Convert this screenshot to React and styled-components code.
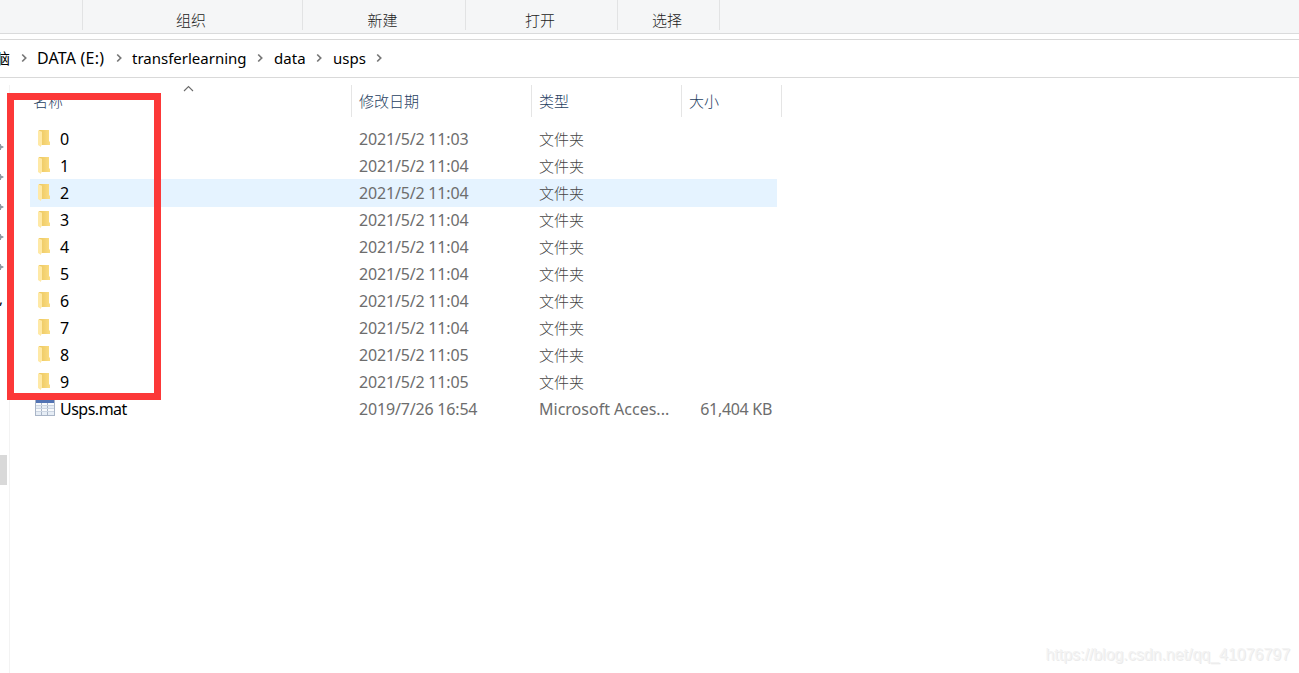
import styled, { createGlobalStyle } from 'styled-components';

const GlobalStyle = createGlobalStyle`
  * {
    box-sizing: border-box;
  }
  body {
    margin: 0;
    background: #ffffff;
    overflow: hidden;
    font-family: 'Noto Sans', 'Noto Sans CJK SC', sans-serif;
    font-size: 15px;
    color: #000000;
  }
`;

const Window = styled.div`
  position: relative;
  display: flex;
  flex-direction: column;
  width: 1299px;
  height: 673px;
  overflow: hidden;
  background: #ffffff;
`;

const Ribbon = styled.div`
  display: flex;
  height: 34px;
  background: #f5f6f7;
  border-bottom: 1px solid #dadbdc;
`;

const RibbonGroup = styled.div`
  width: ${({ $width }) => $width}px;
  height: 30px;
  padding-top: 10px;
  padding-right: 3px;
  border-right: 1px solid #e2e3e4;
  font-family: 'Noto Sans CJK SC', sans-serif;
  font-weight: 300;
  line-height: 20px;
  text-align: center;
  color: #222222;
`;

const AddressBar = styled.div`
  display: flex;
  align-items: center;
  height: 39px;
  margin-top: 5px;
  padding-bottom: 2px;
  border-top: 1px solid #d9d9d9;
  border-bottom: 1px solid #d9d9d9;
  overflow: hidden;
`;

const Crumb = styled.span`
  flex: none;
  width: ${({ $width }) => $width}px;
  margin-left: ${({ $gap = 9 }) => $gap}px;
  font-size: ${({ $size = 15 }) => $size}px;
  line-height: 20px;
  letter-spacing: ${({ $spacing = 0 }) => $spacing}px;
  white-space: nowrap;
`;

const CrumbArrow = styled.svg`
  flex: none;
  width: 7px;
  height: 10px;
  margin-left: ${({ $gap = 10 }) => $gap}px;
`;

const Content = styled.div`
  display: flex;
  flex: 1;
`;

const NavPane = styled.div`
  display: flex;
  flex-direction: column;
  width: 9px;
`;

const PinList = styled.div`
  display: flex;
  flex-direction: column;
  gap: 24px;
  padding-top: 66px;
  svg {
    display: block;
    width: 4px;
    height: 6px;
  }
`;

const NavLabel = styled.div`
  display: flex;
  width: 3px;
  height: 20px;
  margin-top: 18px;
  justify-content: flex-end;
  line-height: 20px;
`;

const NavThumb = styled.div`
  width: 7px;
  height: 30px;
  margin-top: 147px;
  background: #d9d9d9;
`;

const FilePane = styled.div`
  flex: 1;
  margin-top: 7px;
  border-left: 1px solid #f3f3f3;
`;

const HeaderRow = styled.div`
  display: flex;
  height: 32px;
  padding-left: 20px;
`;

const HeaderCell = styled.div`
  width: ${({ $width }) => $width}px;
  padding-left: ${({ $pad = 7 }) => $pad}px;
  padding-top: 6px;
  border-right: 1px solid #e5e5e5;
  font-family: 'Noto Sans CJK SC', sans-serif;
  font-weight: 300;
  line-height: 20px;
  color: #26405f;
`;

const SortArrow = styled.svg`
  position: absolute;
  left: 183px;
  top: 85px;
  width: 11px;
  height: 7px;
`;

const Rows = styled.div`
  padding: 8px 0 0 20px;
`;

const Row = styled.div`
  display: grid;
  grid-template-columns: 329px 180px 133px 100px;
  width: 747px;
  height: ${({ $active }) => ($active ? 28 : 27)}px;
  margin-bottom: ${({ $active }) => ($active ? -1 : 0)}px;
  background: ${({ $active }) => ($active ? '#e5f3ff' : 'transparent')};
  line-height: 28px;
`;

const NameCell = styled.div`
  display: flex;
  padding-left: 5px;
  font-size: 16px;
  letter-spacing: ${({ $spacing = 0 }) => $spacing}px;
  svg {
    flex: none;
    width: 20px;
    height: 19px;
    margin-top: 5px;
    margin-right: 5px;
  }
`;

const Cell = styled.div`
  font-size: 16px;
  color: #6d6d6d;
  white-space: nowrap;
  letter-spacing: ${({ $spacing = 0 }) => $spacing}px;
  text-align: ${({ $right }) => ($right ? 'right' : 'left')};
`;

const TypeCell = styled(Cell)`
  font-family: 'Noto Sans CJK SC', sans-serif;
  font-size: 15px;
  font-weight: 300;
  color: #444444;
`;

const RedFrame = styled.div`
  position: absolute;
  left: 7px;
  top: 93px;
  width: 154px;
  height: 307px;
  border: 7px solid #fc3838;
`;

const Watermark = styled.div`
  position: absolute;
  right: 9px;
  bottom: 8px;
  font-family: 'Liberation Sans', sans-serif;
  font-size: 16px;
  line-height: 20px;
  letter-spacing: -0.03px;
  color: #f3f3f3;
  text-shadow: 1px 1px 0 #ebebeb;
`;

const Arrow = ({ gap }) => (
  <CrumbArrow $gap={gap} viewBox="0 0 7 10">
    <path d="M1.2 1.5 4.7 5 1.2 8.5" fill="none" stroke="#767676" strokeWidth="1.7" />
  </CrumbArrow>
);

const FolderIcon = () => (
  <svg viewBox="0 0 20 19">
    <defs>
      <linearGradient id="folderBack" x1="0" x2="1">
        <stop offset="0" stopColor="#ecc75f" />
        <stop offset="1" stopColor="#fbdd83" />
      </linearGradient>
    </defs>
    <path d="M4 0h10v11l1 1v3H6z" fill="url(#folderBack)" />
    <path d="M3 0.3 7 1.8v13.4l-1 0.3v1.4L3 15z" fill="#ffe9a6" />
  </svg>
);

const TableIcon = () => (
  <svg viewBox="0 0 20 19" shapeRendering="crispEdges">
    <rect x="0" y="0" width="20" height="16" fill="#a9b5c7" />
    <rect x="1" y="0" width="18" height="3" fill="#5273b4" />
    {[3, 6, 9, 12].map((y, i) =>
      [1, 7, 13].map((x) => (
        <rect key={`${x}-${y}`} x={x} y={y} width={x === 13 ? 6 : 5} height={i === 3 ? 3 : 2} fill={i % 2 ? '#e6edf5' : '#f8fafc'} />
      ))
    )}
    {[5, 8, 11].map((y) => (
      <rect key={y} x="1" y={y} width="18" height="1" fill="#ccd5e2" />
    ))}
  </svg>
);

const groups = [
  { label: '', width: 83 },
  { label: '组织', width: 220 },
  { label: '新建', width: 163 },
  { label: '打开', width: 152 },
  { label: '选择', width: 102 },
];

const folders = [
  { name: '0', date: '2021/5/2 11:03' },
  { name: '1', date: '2021/5/2 11:04' },
  { name: '2', date: '2021/5/2 11:04' },
  { name: '3', date: '2021/5/2 11:04' },
  { name: '4', date: '2021/5/2 11:04' },
  { name: '5', date: '2021/5/2 11:04' },
  { name: '6', date: '2021/5/2 11:04' },
  { name: '7', date: '2021/5/2 11:04' },
  { name: '8', date: '2021/5/2 11:05' },
  { name: '9', date: '2021/5/2 11:05' },
];

const App = () => {
  return (
    <Window>
      <GlobalStyle />
      <Ribbon>
        {groups.map((group) => (
          <RibbonGroup key={group.width} $width={group.width}>
            {group.label}
          </RibbonGroup>
        ))}
      </Ribbon>
      <AddressBar>
        <Crumb $width={15} $gap={-5}>脑</Crumb>
        <Arrow gap={11} />
        <Crumb $width={69} $size={16} $spacing={0.2}>DATA (E:)</Crumb>
        <Arrow />
        <Crumb $width={115}>transferlearning</Crumb>
        <Arrow />
        <Crumb $width={33} $gap={10} $spacing={0.1}>data</Crumb>
        <Arrow gap={9} />
        <Crumb $width={34} $gap={10}>usps</Crumb>
        <Arrow gap={9} />
      </AddressBar>
      <Content>
        <NavPane>
          <PinList>
            {[0, 1, 2, 3, 4].map((pin) => (
              <svg key={pin} viewBox="0 0 4 6">
                <path d="M0 0h1v1.5l2.5 1v1L1 4.5V6H0z" fill="#909aa3" />
              </svg>
            ))}
          </PinList>
          <NavLabel>,</NavLabel>
          <NavThumb />
        </NavPane>
        <FilePane>
          <HeaderRow>
            <HeaderCell $width={322} $pad={3}>名称</HeaderCell>
            <HeaderCell $width={180}>修改日期</HeaderCell>
            <HeaderCell $width={150}>类型</HeaderCell>
            <HeaderCell $width={100}>大小</HeaderCell>
          </HeaderRow>
          <Rows>
            {folders.map((folder) => (
              <Row key={folder.name} $active={folder.name === '2'}>
                <NameCell>
                  <FolderIcon />
                  {folder.name}
                </NameCell>
                <Cell $spacing={-0.18}>{folder.date}</Cell>
                <TypeCell>文件夹</TypeCell>
              </Row>
            ))}
            <Row>
              <NameCell $spacing={-0.5}>
                <TableIcon />
                Usps.mat
              </NameCell>
              <Cell $spacing={-0.18}>2019/7/26 16:54</Cell>
              <Cell>Microsoft Acces...</Cell>
              <Cell $right $spacing={-0.3}>61,404 KB</Cell>
            </Row>
          </Rows>
        </FilePane>
      </Content>
      <SortArrow viewBox="0 0 11 7">
        <path d="M1 6 5.5 1.5 10 6" fill="none" stroke="#6b6b6b" strokeWidth="1.1" />
      </SortArrow>
      <RedFrame />
      <Watermark>https://blog.csdn.net/qq_41076797</Watermark>
    </Window>
  );
};

export default App;
